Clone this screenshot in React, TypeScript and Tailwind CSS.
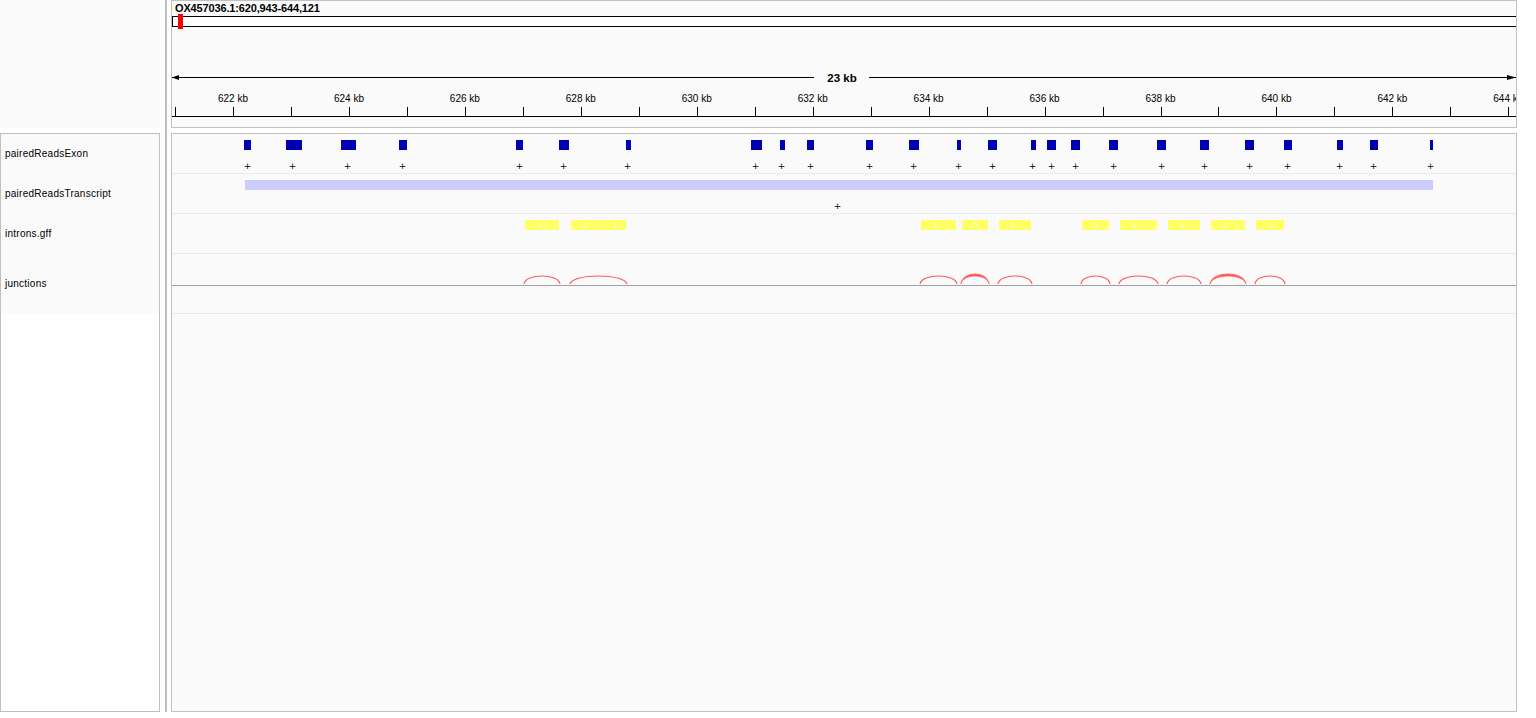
import React from "react";

const X0 = 172;
const KB = 57.97;
const tickX = (k: number) => 233 + KB * (k - 622) - X0;

const exons: [number, number][] = [
  [244, 251], [286, 302], [341, 356], [399, 407], [516, 523], [559, 569], [626, 631],
  [751, 762], [780, 785], [807, 814], [866, 873], [909, 919], [957, 961], [988, 997],
  [1031, 1036], [1047, 1056], [1071, 1080], [1109, 1118], [1157, 1166], [1200, 1209],
  [1245, 1254], [1284, 1292], [1337, 1343], [1370, 1378], [1430, 1433],
];
const pluses = [247, 292, 347, 402, 519, 563, 627, 755, 781, 810, 869, 913, 958, 992, 1032, 1051, 1075, 1113, 1161, 1204, 1249, 1287, 1339, 1373, 1430];

const introns: [number, number][] = [
  [525, 559], [571, 626], [921, 956], [962, 988], [999, 1031], [1082, 1109],
  [1120, 1157], [1168, 1200], [1211, 1245], [1256, 1284],
];
const chevrons = [539, 585, 615, 935, 976, 1013, 1096, 1134, 1182, 1225, 1270];

const arcs: { a: number; b: number; peak: number; thick?: boolean }[] = [
  { a: 524, b: 560, peak: 22 },
  { a: 570, b: 627, peak: 22 },
  { a: 920, b: 957, peak: 22 },
  { a: 961, b: 989, peak: 20, thick: true },
  { a: 998, b: 1032, peak: 22 },
  { a: 1081, b: 1110, peak: 22 },
  { a: 1119, b: 1158, peak: 22 },
  { a: 1167, b: 1201, peak: 22 },
  { a: 1210, b: 1246, peak: 20, thick: true },
  { a: 1255, b: 1285, peak: 22 },
];

function ctrl(peak: number) {
  return 30 - (30 - peak) / 0.75;
}

function arcPath(a: number, b: number, peak: number) {
  const x1 = a - X0;
  const x2 = b - X0;
  const w = x2 - x1;
  const c = ctrl(peak);
  return `M ${x1} 30 C ${x1 + w * 0.04} ${c} ${x2 - w * 0.04} ${c} ${x2} 30`;
}

function thickPath(a: number, b: number, peak: number) {
  const x1 = a - X0;
  const x2 = b - X0;
  const w = x2 - x1;
  const c1 = ctrl(peak);
  const c2 = ctrl(peak + 2);
  return `M ${x1} 30 C ${x1 + w * 0.04} ${c1} ${x2 - w * 0.04} ${c1} ${x2} 30 C ${x2 - w * 0.06} ${c2} ${x1 + w * 0.06} ${c2} ${x1} 30 Z`;
}

function Ruler() {
  const ticks: number[] = [];
  for (let k = 621; k <= 644; k++) ticks.push(k);
  return (
    <svg width={1344} height={126} className="block" shapeRendering="crispEdges">
      <text x={3} y={10.8} fontSize={11} fontWeight={700} letterSpacing={-0.15} fill="#000" shapeRendering="auto">
        OX457036.1:620,943-644,121
      </text>
      <rect x={0} y={15} width={1344} height={10} fill="#ffffff" />
      <line x1={0} y1={15.5} x2={1344} y2={15.5} stroke="#000" strokeWidth={1} />
      <line x1={0} y1={25.5} x2={1344} y2={25.5} stroke="#000" strokeWidth={1} />
      <line x1={0.5} y1={15} x2={0.5} y2={26} stroke="#000" strokeWidth={1} />
      <rect x={6} y={13} width={5} height={15} fill="#ff0000" />

      <line x1={0} y1={76.5} x2={642} y2={76.5} stroke="#000" strokeWidth={1} />
      <line x1={697} y1={76.5} x2={1344} y2={76.5} stroke="#000" strokeWidth={1} />
      <polygon points="0,76.5 7,74 7,79" fill="#000" shapeRendering="auto" />
      <polygon points="1344,76.5 1335,74 1335,79" fill="#000" shapeRendering="auto" />
      <text x={670} y={80.5} fontSize={11.5} fontWeight={700} textAnchor="middle" fill="#000" shapeRendering="auto">
        23 kb
      </text>

      {ticks.map((k) => {
        const x = Math.round(tickX(k)) + 0.5;
        return <line key={k} x1={x} y1={106} x2={x} y2={115} stroke="#000" strokeWidth={1} />;
      })}
      {ticks
        .filter((k) => k % 2 === 0)
        .map((k) => (
          <text key={"l" + k} x={tickX(k)} y={101} fontSize={10} textAnchor="middle" fill="#000" shapeRendering="auto">
            {k} kb
          </text>
        ))}
      <line x1={0} y1={115.5} x2={1344} y2={115.5} stroke="#000" strokeWidth={1} />
    </svg>
  );
}

function Plus({ x, y }: { x: number; y: number }) {
  return (
    <text
      x={x}
      y={y}
      fontSize={9}
      textAnchor="middle"
      fill="#000"
      fontFamily="'DejaVu Sans', sans-serif"
    >
      +
    </text>
  );
}

function ExonTrack() {
  return (
    <svg width={1344} height={39} className="block">
      {exons.map(([a, b], i) => (
        <rect key={i} x={a - X0} y={6} width={b - a} height={10} fill="#0000b2" shapeRendering="crispEdges" />
      ))}
      {pluses.map((x, i) => (
        <Plus key={"p" + i} x={x - X0 + 0.5} y={35.3} />
      ))}
    </svg>
  );
}

function TranscriptTrack() {
  return (
    <svg width={1344} height={39} className="block">
      <rect x={245 - X0} y={6} width={1433 - 245} height={10} fill="#ccccff" shapeRendering="crispEdges" />
      <Plus x={837 - X0 + 0.5} y={35.3} />
    </svg>
  );
}

function IntronTrack() {
  return (
    <svg width={1344} height={39} className="block">
      {introns.map(([a, b], i) => (
        <rect key={i} x={a - X0} y={6} width={b - a} height={10} fill="#ffff66" shapeRendering="crispEdges" />
      ))}
      {chevrons.map((x, i) => {
        const cx = x - X0;
        return (
          <polyline
            key={"c" + i}
            points={`${cx - 1.5},8.5 ${cx + 1.5},11 ${cx - 1.5},13.5`}
            fill="none"
            stroke="#ffffff"
            strokeWidth={1}
          />
        );
      })}
    </svg>
  );
}

function JunctionTrack() {
  return (
    <svg width={1344} height={59} className="block">
      {arcs.map((r, i) =>
        r.thick ? (
          <path key={i} d={thickPath(r.a, r.b, r.peak)} fill="#ff5a5a" stroke="#ff5a5a" strokeWidth={0.8} />
        ) : (
          <path key={i} d={arcPath(r.a, r.b, r.peak)} fill="none" stroke="#ff5a5a" strokeWidth={1.2} />
        )
      )}
      <line x1={0} y1={31.5} x2={1344} y2={31.5} stroke="#a0a0a0" strokeWidth={1} shapeRendering="crispEdges" />
    </svg>
  );
}

const labels: { name: string; h: string }[] = [
  { name: "pairedReadsExon", h: "h-[40px]" },
  { name: "pairedReadsTranscript", h: "h-[40px]" },
  { name: "introns.gff", h: "h-[40px]" },
  { name: "junctions", h: "h-[60px]" },
];

export default function App() {
  return (
    <div className="w-[1536px] h-[718px] bg-white flex items-start overflow-hidden font-['Liberation_Sans',Arial,sans-serif] text-black">
      {/* left column */}
      <div className="w-[160px] flex flex-col shrink-0">
        <div className="h-[128px] bg-[#fafafa]" />
        <div className="mt-[5px] h-[579px] border border-[#c0c0c0] bg-white flex flex-col">
          <div className="bg-[#fafafa] flex flex-col">
            {labels.map((l) => (
              <div key={l.name} className={`${l.h} flex items-center pl-[4px] text-[10px] tracking-[0.25px] leading-none`}>
                {l.name}
              </div>
            ))}
          </div>
        </div>
      </div>

      <div className="w-[5px] shrink-0" />
      <div className="w-[2px] h-[712px] bg-[#c0c0c0] shrink-0" />
      <div className="w-[4px] shrink-0" />

      {/* right column */}
      <div className="w-[1346px] flex flex-col shrink-0">
        <div className="h-[128px] border border-[#c0c0c0] bg-[#fafafa] overflow-hidden">
          <Ruler />
        </div>
        <div className="mt-[5px] h-[579px] border border-[#c0c0c0] bg-[#fafafa] flex flex-col overflow-hidden">
          <div className="h-[40px] border-b border-[#ebebeb]">
            <ExonTrack />
          </div>
          <div className="h-[40px] border-b border-[#ebebeb]">
            <TranscriptTrack />
          </div>
          <div className="h-[40px] border-b border-[#ebebeb]">
            <IntronTrack />
          </div>
          <div className="h-[60px] border-b border-[#ebebeb]">
            <JunctionTrack />
          </div>
        </div>
      </div>
    </div>
  );
}
